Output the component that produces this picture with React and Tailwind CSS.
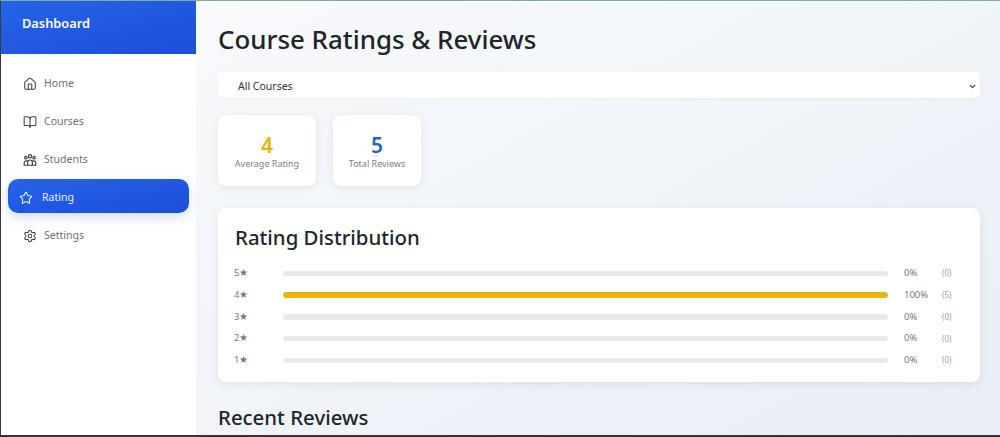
import React from "react";
import { Home, BookOpen, Star, Settings, ChevronDown } from "lucide-react";

const Students = ({ className }) => (
  <svg viewBox="0 0 24 24" width="14" height="14" fill="none" stroke="currentColor" strokeWidth="2" strokeLinecap="round" strokeLinejoin="round" className={className}>
    <circle cx="12" cy="5.5" r="2.8" />
    <circle cx="5" cy="8" r="2.2" />
    <circle cx="19" cy="8" r="2.2" />
    <path d="M8 21v-5a4 4 0 0 1 8 0v5z" />
    <path d="M8 21H2v-4a3.5 3.5 0 0 1 3.5-3.5H8" />
    <path d="M16 21h6v-4a3.5 3.5 0 0 0-3.5-3.5H16" />
  </svg>
);

const nav = [
  { label: "Home", Icon: Home },
  { label: "Courses", Icon: BookOpen },
  { label: "Students", Icon: Students },
  { label: "Rating", Icon: Star, active: true },
  { label: "Settings", Icon: Settings },
];

const dist = [
  { s: 5, p: 0, c: 0 },
  { s: 4, p: 100, c: 5 },
  { s: 3, p: 0, c: 0 },
  { s: 2, p: 0, c: 0 },
  { s: 1, p: 0, c: 0 },
];

export default function App() {
  return (
    <div className="flex flex-col h-[437px] w-[1000px] overflow-hidden border-l border-l-[#3a3a3a] border-t border-t-[#7fae9c] border-b-2 border-b-[#333333] font-['Noto_Sans','Open_Sans',sans-serif] bg-white">
      <div className="flex flex-1 min-h-0">
        <aside className="w-[195px] shrink-0 bg-white flex flex-col">
          <div className="h-[53px] shrink-0 bg-gradient-to-br from-[#2563eb] to-[#1d4ed8] pl-[21px] pt-[12px] text-white text-[12.8px] font-semibold leading-[20px]">
            Dashboard
          </div>
          <nav className="flex flex-col gap-[4px] mt-[12px] px-[7px]">
            {nav.map(({ label, Icon, active }) =>
              active ? (
                <div key={label} className="h-[34px] -mt-[1px] mb-[1px] pt-[3px] flex items-center gap-[9px] pl-[11px] rounded-[10px] bg-gradient-to-br from-[#2563eb] to-[#1d4ed8] text-[#eaf0ff] text-[10.5px] shadow-[0_4px_12px_rgba(37,99,235,0.22)]">
                  <Icon size={14} strokeWidth={1.8} />
                  <span>{label}</span>
                </div>
              ) : (
                <div key={label} className="h-[34px] pt-[2px] flex items-center gap-[7px] pl-[15px] text-[#6b7078] text-[10.5px]">
                  <Icon size={14} strokeWidth={1.8} className="text-[#3f444b]" />
                  <span>{label}</span>
                </div>
              )
            )}
          </nav>
        </aside>
        <main className="flex-1 min-w-0 overflow-hidden bg-gradient-to-br from-[#f8fafc] to-[#e9eef6] pl-[22px] pr-[20px]">
          <h1 className="mt-[20px] text-[25.9px] leading-[36px] font-medium text-[#212529]">Course Ratings &amp; Reviews</h1>
          <div className="mt-[15px] h-[26px] rounded-[5px] bg-white flex items-center justify-between pl-[20px] pr-[3px] pt-[3px] text-[10.5px] text-[#30343a] shadow-[0_1px_3px_rgba(0,0,0,0.04)]">
            <span>All Courses</span>
            <ChevronDown size={9} strokeWidth={3.5} className="text-[#444]" />
          </div>
          <div className="flex gap-[17px] mt-[17px]">
            <div className="w-[98px] h-[71px] rounded-[8px] bg-white shadow-[0_2px_8px_rgba(0,0,0,0.08)] flex flex-col items-center pt-[16px]">
              <div className="text-[21px] leading-[28px] font-semibold text-[#eab308]">4</div>
              <div className="text-[9px] leading-[14px] mt-[-2px] text-[#7b8088]">Average Rating</div>
            </div>
            <div className="w-[88px] h-[71px] rounded-[8px] bg-white shadow-[0_2px_8px_rgba(0,0,0,0.08)] flex flex-col items-center pt-[16px]">
              <div className="text-[21px] leading-[28px] font-semibold text-[#1f5fe0]">5</div>
              <div className="text-[9px] leading-[14px] mt-[-2px] text-[#7b8088]">Total Reviews</div>
            </div>
          </div>
          <section className="mt-[22px] h-[174px] rounded-[8px] bg-white shadow-[0_2px_8px_rgba(0,0,0,0.08)] pl-[16px] pr-[28px] pt-[14px]">
            <h2 className="text-[20.4px] leading-[30px] font-medium text-[#212529] ml-[1px]">Rating Distribution</h2>
            <div className="mt-[13.3px] flex flex-col gap-[5.75px]">
              {dist.map((d) => (
                <div key={d.s} className="flex items-center h-[16px] text-[9.5px] text-[#73787f]">
                  <span className="w-[49px] shrink-0">{d.s}★</span>
                  <div className="w-[605px] shrink-0 h-[5.5px] rounded-full bg-[#e9e9e9] overflow-hidden">
                    <div className="h-full rounded-full bg-[#eab308]" style={{ width: `${d.p}%` }} />
                  </div>
                  <span className="w-[38px] shrink-0 ml-[16px]">{d.p}%</span>
                  <span className="text-[8px] text-[#9a9fa6]">({d.c})</span>
                </div>
              ))}
            </div>
          </section>
          <h2 className="mt-[20px] text-[20.4px] leading-[30px] font-medium text-[#212529]">Recent Reviews</h2>
        </main>
      </div>
    </div>
  );
}
